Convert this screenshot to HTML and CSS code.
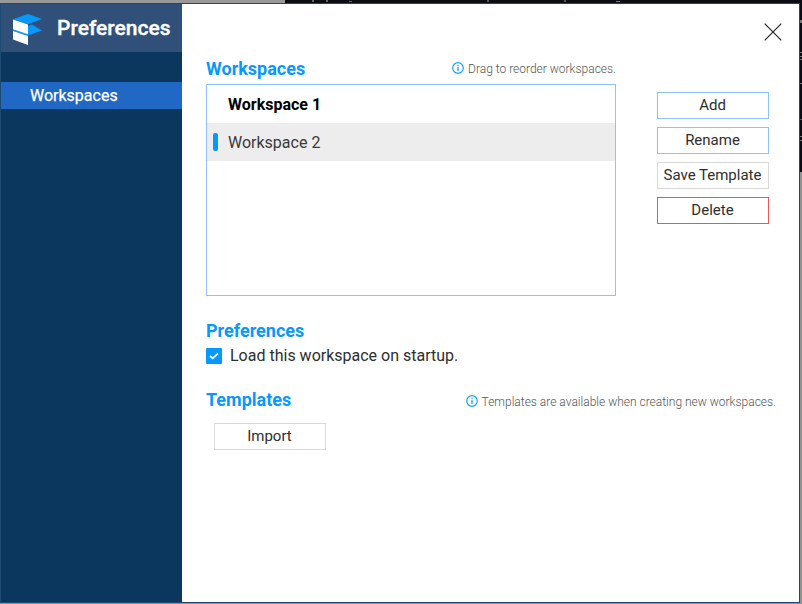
FILE: index.html
```html
<!DOCTYPE html>
<html lang="en">
<head>
<meta charset="utf-8">
<title>Preferences</title>
<link rel="stylesheet" href="styles.css">
</head>
<body>
<div class="window">
  <aside class="sidebar">
    <header class="brand">
      <svg class="logo" width="30" height="32" viewBox="0 0 30 32">
        <path fill="#0698fb" d="M0 5.2 15 0l14 5-14 5.3zM15 17.5V12l4-1.5 10 6-14 4.8V22L0 17v-2z"/>
        <path fill="#fff" d="M0 5.4l15 5v9.8L0 15.2zM0 17l15 5v9L0 25.5z"/>
      </svg>
      <h1 class="title">Preferences</h1>
    </header>
    <nav class="nav"><a class="nav-item">Workspaces</a></nav>
  </aside>
  <main class="content">
    <svg class="close" width="18" height="18" viewBox="0 0 18 18"><path d="M.7.7l16.6 16.6M17.3.7L.7 17.3" stroke="#222" stroke-width="1.15"/></svg>
    <section class="workspaces">
      <div class="list-column">
        <div class="section-head">
          <h2>Workspaces</h2>
          <p class="hint hint-drag"><svg width="12" height="12" viewBox="0 0 12 12"><circle cx="6" cy="6" r="5.3" fill="none" stroke="#18a0fb" stroke-width="1.2"/><path d="M6 5v4M6 2.8v1.3" stroke="#18a0fb" stroke-width="1.3"/></svg><span>Drag to reorder workspaces.</span></p>
        </div>
        <ul class="list">
          <li class="row row-active"><span>Workspace 1</span></li>
          <li class="row row-selected"><span>Workspace 2</span></li>
        </ul>
      </div>
      <div class="actions">
        <button class="btn btn-blue">Add</button>
        <button class="btn btn-blue">Rename</button>
        <button class="btn">Save Template</button>
        <button class="btn btn-red">Delete</button>
      </div>
    </section>
    <section class="preferences">
      <h2>Preferences</h2>
      <div class="check-row">
        <svg width="16" height="16" viewBox="0 0 16 16"><rect width="16" height="16" rx="1" fill="#0698fb"/><path d="M4 8l2.7 2.3L12 5.5" fill="none" stroke="#fff" stroke-width="1.8"/></svg>
        <span>Load this workspace on startup.</span>
      </div>
    </section>
    <section class="templates">
      <div class="section-head">
        <h2>Templates</h2>
        <p class="hint hint-templates"><svg width="12" height="12" viewBox="0 0 12 12"><circle cx="6" cy="6" r="5.3" fill="none" stroke="#18a0fb" stroke-width="1.2"/><path d="M6 5v4M6 2.8v1.3" stroke="#18a0fb" stroke-width="1.3"/></svg><span>Templates are available when creating new workspaces.</span></p>
      </div>
      <button class="btn import">Import</button>
    </section>
  </main>
</div>
</body>
</html>
```
FILE: styles.css
```css
* { box-sizing: border-box; }
body {
  margin: 0;
  width: 802px;
  height: 604px;
  padding: 3px 2px 1px 0;
  overflow: hidden;
  font-family: Roboto, sans-serif;
  background:
    linear-gradient(#666, #666) 312px 0 / 2px 2px no-repeat,
    linear-gradient(#666, #666) 326px 0 / 2px 2px no-repeat,
    linear-gradient(#667, #667) 349px 1px / 3px 1px no-repeat,
    linear-gradient(#555, #555) 487px 0 / 2px 2px no-repeat,
    linear-gradient(#555, #555) 564px 0 / 2px 2px no-repeat,
    linear-gradient(#778, #778) 616px 1px / 4px 1px no-repeat,
    linear-gradient(#777, #777) 800px 20px / 2px 3px no-repeat,
    linear-gradient(#777, #777) 800px 52px / 2px 1px no-repeat,
    linear-gradient(#777, #777) 800px 56px / 2px 1px no-repeat,
    linear-gradient(#777, #777) 800px 59px / 2px 1px no-repeat,
    linear-gradient(#777, #777) 800px 83px / 2px 1px no-repeat,
    linear-gradient(#557, #557) 800px 119px / 2px 1px no-repeat,
    linear-gradient(#777, #777) 800px 136px / 2px 1px no-repeat,
    linear-gradient(#777, #777) 800px 140px / 2px 1px no-repeat,
    linear-gradient(#999, #999) 0 0 / 285px 3px no-repeat,
    linear-gradient(#0c0c14, #0c0c14) 0 0 / 802px 172px no-repeat,
    #929292;
}
h1, h2, p, ul { margin: 0; padding: 0; }
.window {
  display: flex;
  width: 800px;
  height: 600px;
  border: 1px solid #1d4a73;
  background: #fff;
}
.sidebar { width: 181px; background: #0b375e; }
.brand {
  display: flex;
  height: 48px;
  padding: 10px 0 0 12px;
  background: #30507a;
}
.logo { flex: none; }
.title {
  margin-left: 14px;
  font-size: 21px;
  line-height: 28px;
  font-weight: 500;
  color: #fff;
  -webkit-text-stroke: 0.35px #fff;
}
.nav { padding-top: 30px; }
.nav-item {
  display: block;
  height: 27px;
  padding-left: 29px;
  font-size: 16px;
  line-height: 27px;
  color: #fff;
  background: #2168c4;
  -webkit-text-stroke: 0.25px #fff;
}
.content {
  position: relative;
  flex: 1;
  padding: 54px 23px 0 24px;
}
.close { position: absolute; left: 582px; top: 19px; }
h2 {
  font-size: 18px;
  line-height: 22px;
  font-weight: 700;
  color: #0698fb;
}
.workspaces { display: flex; }
.list-column { width: 410px; }
.section-head { display: flex; justify-content: space-between; }
.workspaces .section-head { height: 26px; }
.hint {
  display: flex;
  align-items: center;
  gap: 4px;
  height: 22px;
  font-size: 12px;
  font-weight: 300;
  color: #555;
  white-space: nowrap;
}
.hint-drag svg { margin-bottom: 2px; }
.hint-templates { margin-top: 2px; }
.hint-templates svg { margin-bottom: 2px; }
.list {
  height: 212px;
  border: 1px solid #8fc3f8;
  list-style: none;
}
.row {
  display: flex;
  align-items: center;
  height: 38px;
  padding-left: 21px;
  font-size: 16px;
  color: #3a3a3a;
}
.row-active { font-weight: 700; color: #000; }
.row-selected { padding-left: 6px; background: #ededed; }
.row-selected::before {
  content: "";
  width: 5px;
  height: 18px;
  margin-right: 10px;
  border-radius: 2px;
  background: #0698fb;
}
.actions {
  display: flex;
  flex-direction: column;
  gap: 8px;
  padding-top: 34px;
  margin-left: 41px;
}
.btn {
  display: block;
  width: 112px;
  height: 27px;
  padding: 0 1px 1px 0;
  border: 1px solid #d9d9d9;
  background: #fff;
  font: 400 15px/24px Roboto, sans-serif;
  color: #2e2e2e;
  white-space: nowrap;
}
.btn-blue { border-color: #8fc3f8; }
.btn-red { border-color: #eb5757; }
.preferences { margin-top: 24px; }
.check-row {
  display: flex;
  align-items: center;
  gap: 8px;
  height: 27px;
  font-size: 16px;
  color: #2e2e2e;
}
.templates { margin-top: 20px; }
.templates .section-head { height: 22px; }
.import { margin: 12px 0 0 8px; }
```
